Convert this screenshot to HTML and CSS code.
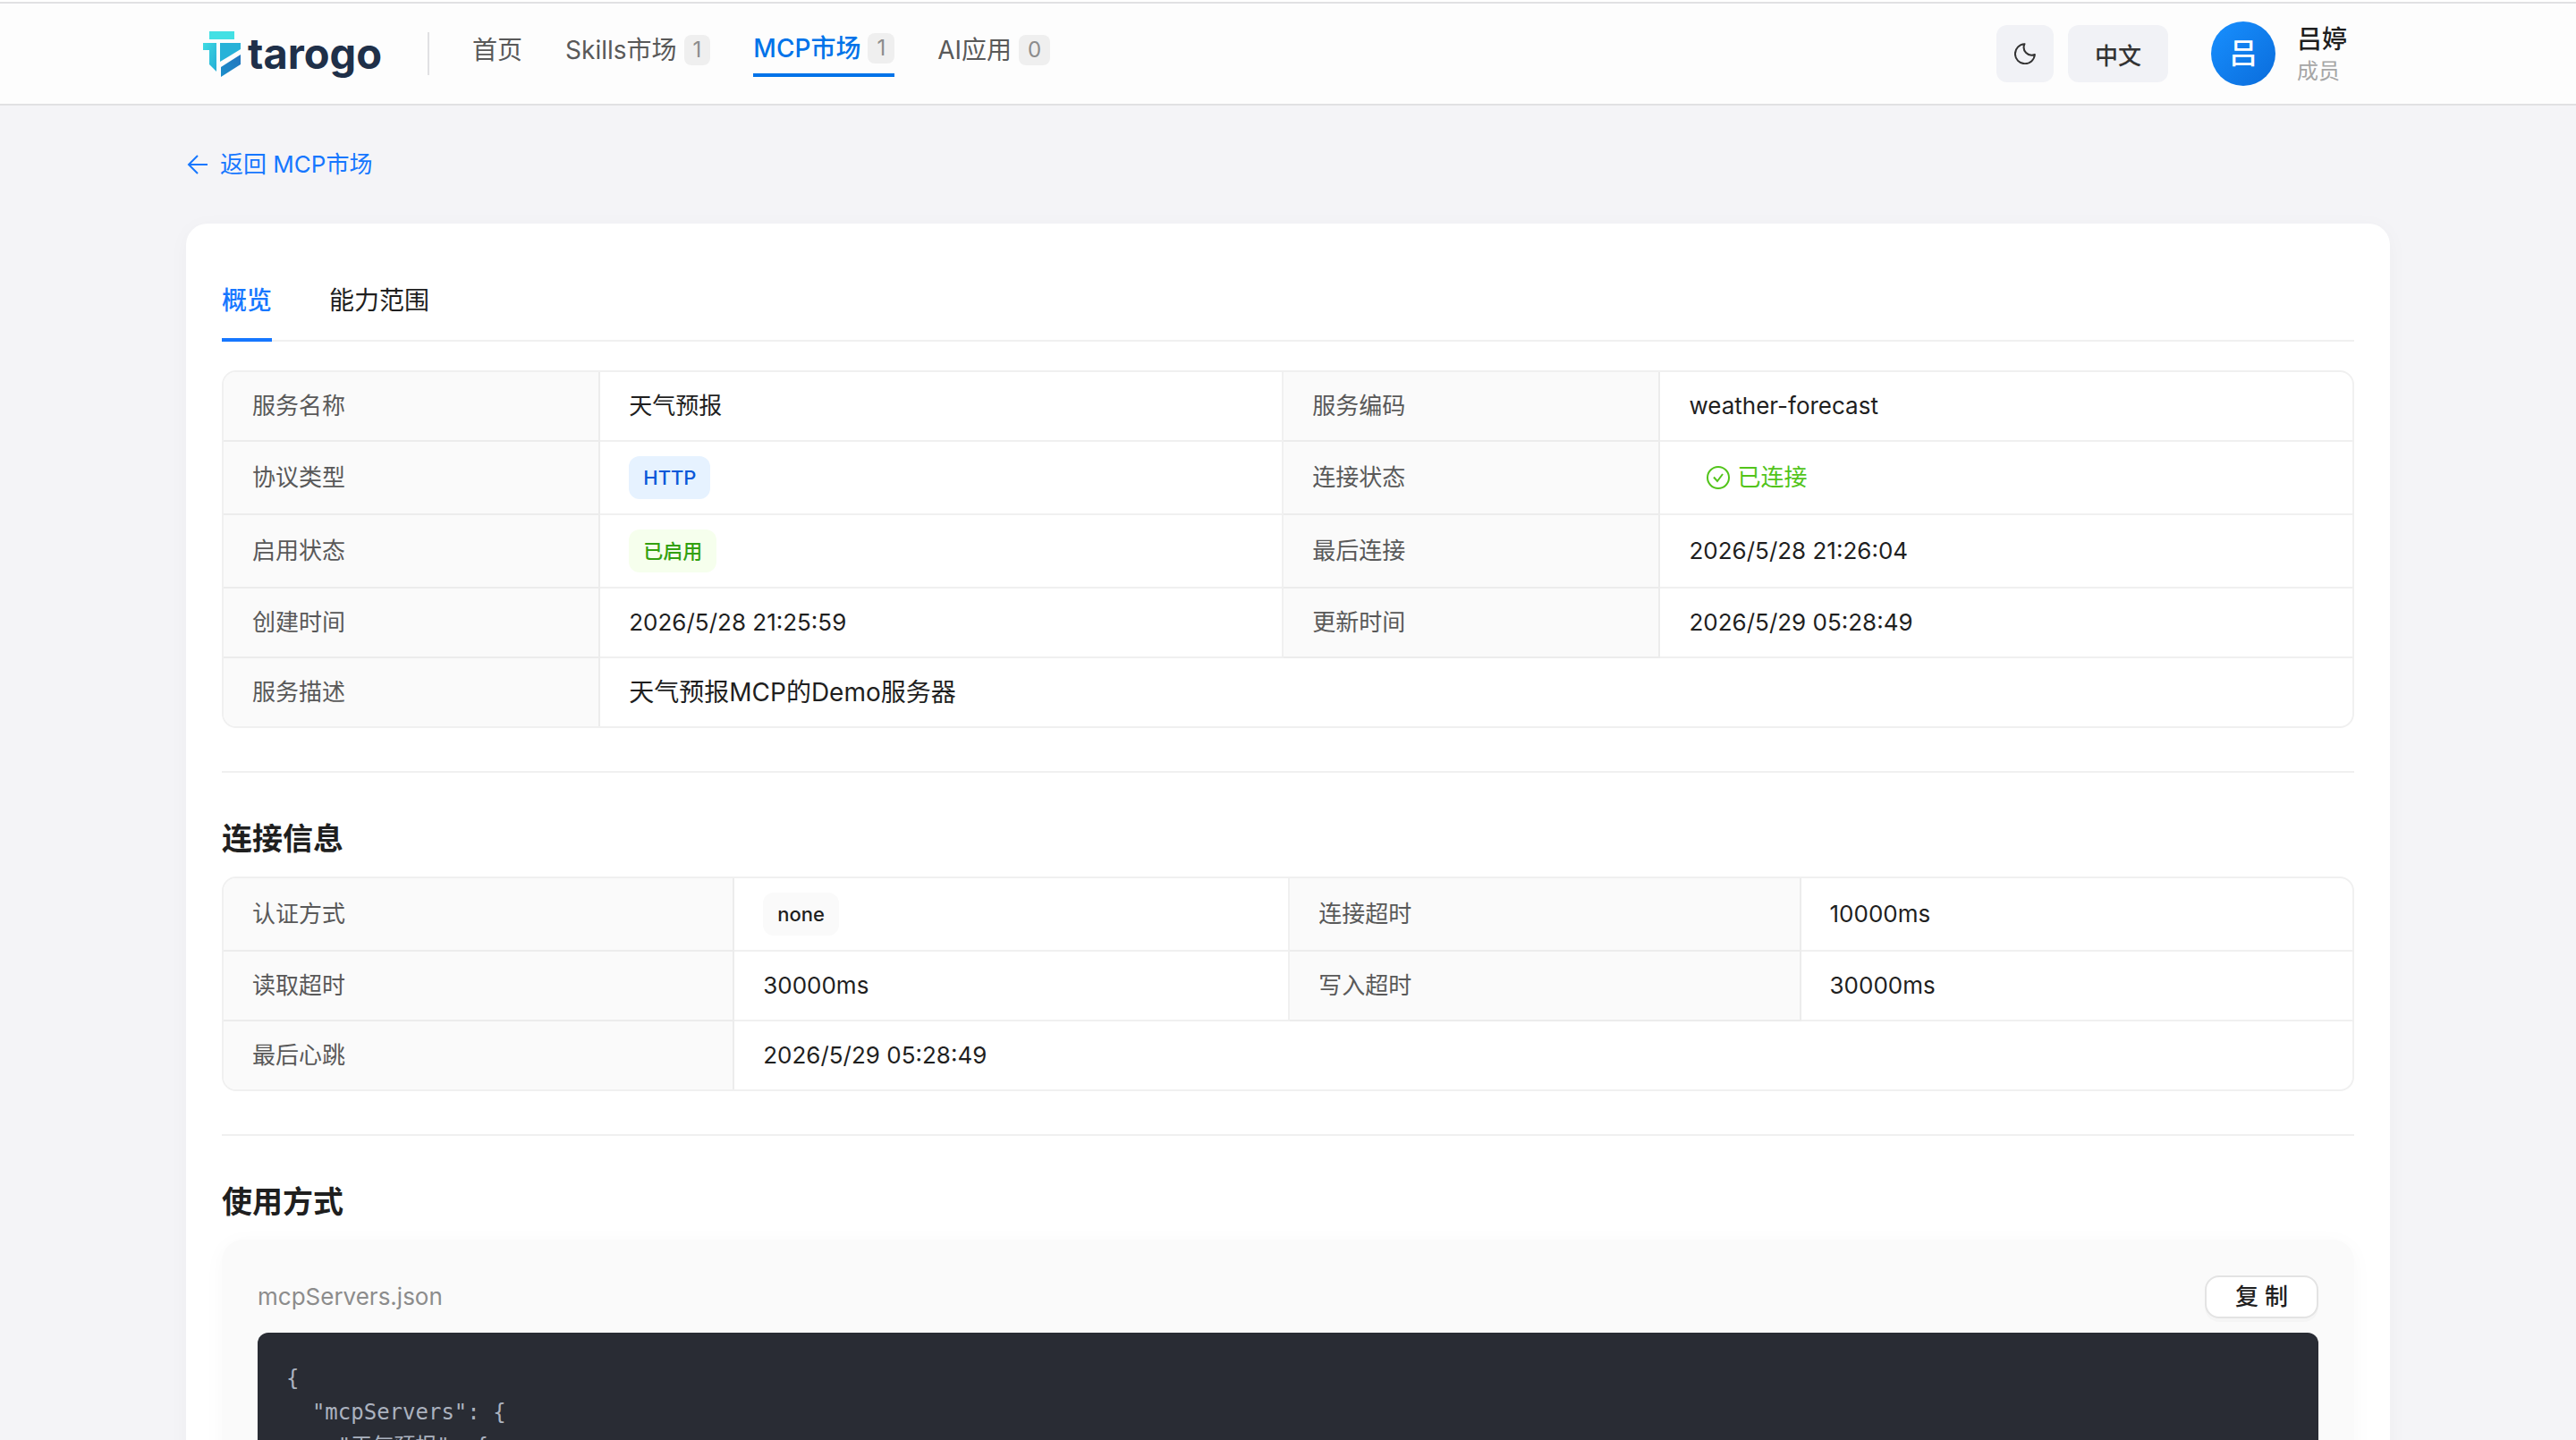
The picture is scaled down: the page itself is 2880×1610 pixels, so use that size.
FILE: index.html
```html
<!DOCTYPE html>
<html lang="zh-CN">
<head>
    <meta charset="UTF-8">
    <meta name="viewport" content="width=device-width, initial-scale=1.0">
    <title>tarogo - MCP市场</title>
    <link rel="stylesheet" href="styles.css">
</head>
<body>
    <header class="header">
        <div class="header-inner">
            <a href="#" class="logo">
                <svg class="logo-mark" viewBox="0 0 42 51" width="42" height="51" aria-hidden="true">
                    <defs>
                        <linearGradient id="g1" x1="0" y1="0" x2="1" y2="1">
                            <stop offset="0" stop-color="#3fdbe2"/>
                            <stop offset="1" stop-color="#25aed6"/>
                        </linearGradient>
                        <linearGradient id="g2" x1="0" y1="1" x2="1" y2="0">
                            <stop offset="0" stop-color="#1b8fcb"/>
                            <stop offset="1" stop-color="#2374bd"/>
                        </linearGradient>
                    </defs>
                    <path d="M7 0h28v9H7z" fill="#43e0e4"/>
                    <path d="M0 13h15v32l-8-8V21H0z" fill="url(#g1)"/>
                    <path d="M19 13h23v7L19 34z" fill="#27b2d8"/>
                    <path d="M42 26v11L20 51V40z" fill="url(#g2)"/>
                </svg>
                <span class="logo-text">tarogo</span>
            </a>
            <nav class="nav">
                <a href="#" class="nav-item">首页</a>
                <a href="#" class="nav-item">Skills市场<span class="count">1</span></a>
                <a href="#" class="nav-item active">MCP市场<span class="count">1</span></a>
                <a href="#" class="nav-item">AI应用<span class="count">0</span></a>
            </nav>
            <div class="actions">
                <button type="button" class="btn-tool btn-theme" aria-label="切换主题">
                    <svg viewBox="0 0 24 24" width="24" height="24" fill="none" stroke="currentColor" stroke-width="2" stroke-linejoin="round">
                        <path d="M11.5 1.2A11 11 0 1 0 22.9 13 8.8 8.8 0 0 1 11.5 1.2z"/>
                    </svg>
                </button>
                <button type="button" class="btn-tool btn-lang">中文</button>
            </div>
            <div class="user">
                <span class="avatar">吕</span>
                <div class="user-info">
                    <span class="user-name">吕婷</span>
                    <span class="user-role">成员</span>
                </div>
            </div>
        </div>
    </header>

    <main class="container">
        <a href="#" class="back">
            <svg viewBox="0 0 24 24" width="24" height="24" fill="none" stroke="currentColor" stroke-width="2">
                <path d="M24 12H3M13 2L3 12l10 10"/>
            </svg>
            返回 MCP市场
        </a>

        <div class="card">
            <div class="tabs" role="tablist">
                <button type="button" class="tab active" role="tab" aria-selected="true">概览</button>
                <button type="button" class="tab" role="tab" aria-selected="false">能力范围</button>
            </div>

            <div class="desc">
                <table class="desc-table overview">
                    <tr>
                        <th>服务名称</th><td>天气预报</td>
                        <th>服务编码</th><td>weather-forecast</td>
                    </tr>
                    <tr>
                        <th>协议类型</th><td><span class="tag blue">HTTP</span></td>
                        <th>连接状态</th>
                        <td>
                            <span class="status">
                                <svg viewBox="0 0 26 26" width="26" height="26" fill="none" stroke="currentColor" stroke-width="2">
                                    <circle cx="13" cy="13" r="12"/>
                                    <path d="M8 12.5l4 4.5 6-8"/>
                                </svg>
                                已连接
                            </span>
                        </td>
                    </tr>
                    <tr>
                        <th>启用状态</th><td><span class="tag green">已启用</span></td>
                        <th>最后连接</th><td>2026/5/28 21:26:04</td>
                    </tr>
                    <tr>
                        <th>创建时间</th><td>2026/5/28 21:25:59</td>
                        <th>更新时间</th><td>2026/5/29 05:28:49</td>
                    </tr>
                    <tr>
                        <th>服务描述</th><td colspan="3" class="summary">天气预报MCP的Demo服务器</td>
                    </tr>
                </table>
            </div>

            <section class="section">
                <h2>连接信息</h2>
                <div class="desc">
                    <table class="desc-table connection">
                        <tr>
                            <th>认证方式</th><td><span class="tag">none</span></td>
                            <th>连接超时</th><td>10000ms</td>
                        </tr>
                        <tr>
                            <th>读取超时</th><td>30000ms</td>
                            <th>写入超时</th><td>30000ms</td>
                        </tr>
                        <tr>
                            <th>最后心跳</th><td colspan="3">2026/5/29 05:28:49</td>
                        </tr>
                    </table>
                </div>
            </section>

            <section class="section">
                <h2>使用方式</h2>
                <div class="usage">
                    <div class="usage-head">
                        <span class="file-name">mcpServers.json</span>
                        <button type="button" class="btn-copy">复 制</button>
                    </div>
<pre class="code">{
  "mcpServers": {
    "天气预报": {</pre>
                </div>
            </section>
        </div>
    </main>
</body>
</html>
```
FILE: styles.css
```css
*{
    box-sizing: border-box;
}
body{
    margin: 0;
    height: 100vh;
    overflow: hidden;
    background-color: #f4f4f7;
    color: #1f1f1f;
    font-family: Inter, "Noto Sans CJK SC", sans-serif;
    font-size: 26px;
    line-height: 44px;
}
a{
    text-decoration: none;
}
button{
    font-family: inherit;
    cursor: pointer;
}
svg{
    flex: none;
}

/* header */
.header{
    border-top: 2px solid #fff;
    border-bottom: 2px solid #e1e1e3;
    background-color: #fdfdfd;
}
.header-inner{
    display: flex;
    align-items: center;
    height: 114px;
    padding: 0 256px 0 227px;
    border-top: 2px solid #e1e1e3;
}
.logo{
    display: flex;
    align-items: center;
    gap: 8px;
    color: #1f3049;
}
.logo-text{
    font-size: 47px;
    font-weight: 700;
    line-height: 48px;
}
.nav{
    display: flex;
    align-items: center;
    gap: 48px;
    height: 48px;
    margin-left: 51px;
    padding-left: 48px;
    border-left: 2px solid #e1e1e3;
}
.nav-item{
    display: flex;
    align-items: center;
    gap: 8px;
    padding-bottom: 8px;
    font-size: 28px;
    line-height: 40px;
    color: #595959;
}
.nav-item.active{
    border-bottom: 4px solid #0073e9;
    color: #0073e9;
    font-weight: 500;
}
.count{
    padding: 0 10px;
    border-radius: 8px;
    background-color: #efefef;
    color: #8c8c8c;
    font-size: 24px;
    font-weight: 400;
    line-height: 34px;
}
.actions{
    display: flex;
    gap: 16px;
    margin-left: auto;
}
.btn-tool{
    display: flex;
    align-items: center;
    justify-content: center;
    height: 64px;
    padding: 0;
    border: none;
    border-radius: 12px;
    background-color: #f1f2f6;
    color: #333;
    font-size: 26px;
    font-weight: 500;
}
.btn-theme{
    width: 64px;
}
.btn-lang{
    padding: 0 30px;
}
.user{
    display: flex;
    align-items: center;
    gap: 24px;
    margin-left: 48px;
}
.avatar{
    width: 72px;
    height: 72px;
    border-radius: 50%;
    background: linear-gradient(135deg, #1890ff, #0a6cdb);
    color: #fff;
    font-size: 32px;
    font-weight: 500;
    line-height: 72px;
    text-align: center;
}
.user-info{
    display: flex;
    flex-direction: column;
    padding-top: 4px;
}
.user-name{
    font-size: 28px;
    font-weight: 500;
    line-height: 36px;
}
.user-role{
    color: #a6a6a6;
    font-size: 24px;
    line-height: 36px;
}

/* page */
.container{
    max-width: 2560px;
    margin: 0 auto;
    padding: 44px 48px;
}
.back{
    display: flex;
    align-items: center;
    gap: 14px;
    width: max-content;
    color: #1677ff;
}
.card{
    margin-top: 44px;
    padding: 40px;
    border-radius: 24px;
    background-color: #fff;
    box-shadow: 0 4px 24px rgba(0, 0, 0, 0.03);
}
.tabs{
    display: flex;
    gap: 64px;
    margin-bottom: 32px;
    box-shadow: inset 0 -2px #f0f0f0;
}
.tab{
    padding: 24px 0 20px;
    border: none;
    border-bottom: 4px solid transparent;
    background: none;
    color: #1f1f1f;
    font-size: 28px;
    line-height: 44px;
}
.tab.active{
    border-color: #1677ff;
    color: #1677ff;
    font-weight: 500;
}

/* description tables */
.desc{
    border: 2px solid #f0f0f0;
    border-radius: 16px;
    overflow: hidden;
}
.desc-table{
    width: 100%;
    border-spacing: 0;
    table-layout: fixed;
}
.desc-table th, .desc-table td{
    padding: 16px 32px;
    border-right: 2px solid #f0f0f0;
    border-bottom: 2px solid #f0f0f0;
    font-weight: 400;
    text-align: left;
    vertical-align: middle;
}
.desc-table th{
    border-color: #ececec;
    background-color: #fafafa;
    color: #595959;
}
.desc-table td:last-child{
    border-right: none;
}
.desc-table tr:last-child > *{
    border-bottom: none;
}
.overview th{
    width: 17.7%;
}
.overview td:nth-child(2){
    width: 32.1%;
}
.connection th{
    width: 24%;
}
.connection td:nth-child(2){
    width: 26.1%;
}
.desc-table .summary{
    font-size: 28px;
}
.tag{
    display: block;
    width: max-content;
    padding: 0 16px;
    border-radius: 12px;
    background-color: #fafafa;
    font-size: 22px;
    font-weight: 500;
    line-height: 48px;
}
.tag.blue{
    background-color: #e6f2ff;
    color: #0958d9;
}
.tag.green{
    background-color: #f6ffed;
    color: #33a010;
}
.status{
    display: flex;
    align-items: center;
    gap: 8px;
    padding-left: 20px;
    color: #52c41a;
}

.section{
    margin-top: 48px;
    padding-top: 52px;
    border-top: 2px solid #f0f0f0;
}
.section h2{
    margin: 0 0 20px;
    font-size: 34px;
    font-weight: 600;
    line-height: 44px;
}
.usage{
    padding: 40px;
    border-radius: 24px;
    background-color: #fafafa;
    box-shadow: 0 4px 24px rgba(0, 0, 0, 0.03);
}
.usage-head{
    display: flex;
    align-items: center;
    justify-content: space-between;
    margin-bottom: 16px;
}
.file-name{
    color: #8c8c8c;
}
.btn-copy{
    height: 48px;
    padding: 0 32px;
    border: 2px solid #e3e3e3;
    border-radius: 16px;
    background-color: #fff;
    box-shadow: 0 4px 0 rgba(0, 0, 0, 0.02);
    color: #1f1f1f;
    font-size: 26px;
    font-weight: 500;
    line-height: 40px;
}
.code{
    margin: 0;
    padding: 32px;
    border-radius: 12px;
    background-color: #292c34;
    color: #abb2bf;
    font-family: "DejaVu Sans Mono", "Noto Sans CJK SC", monospace;
    font-size: 24px;
    line-height: 38px;
}
```
